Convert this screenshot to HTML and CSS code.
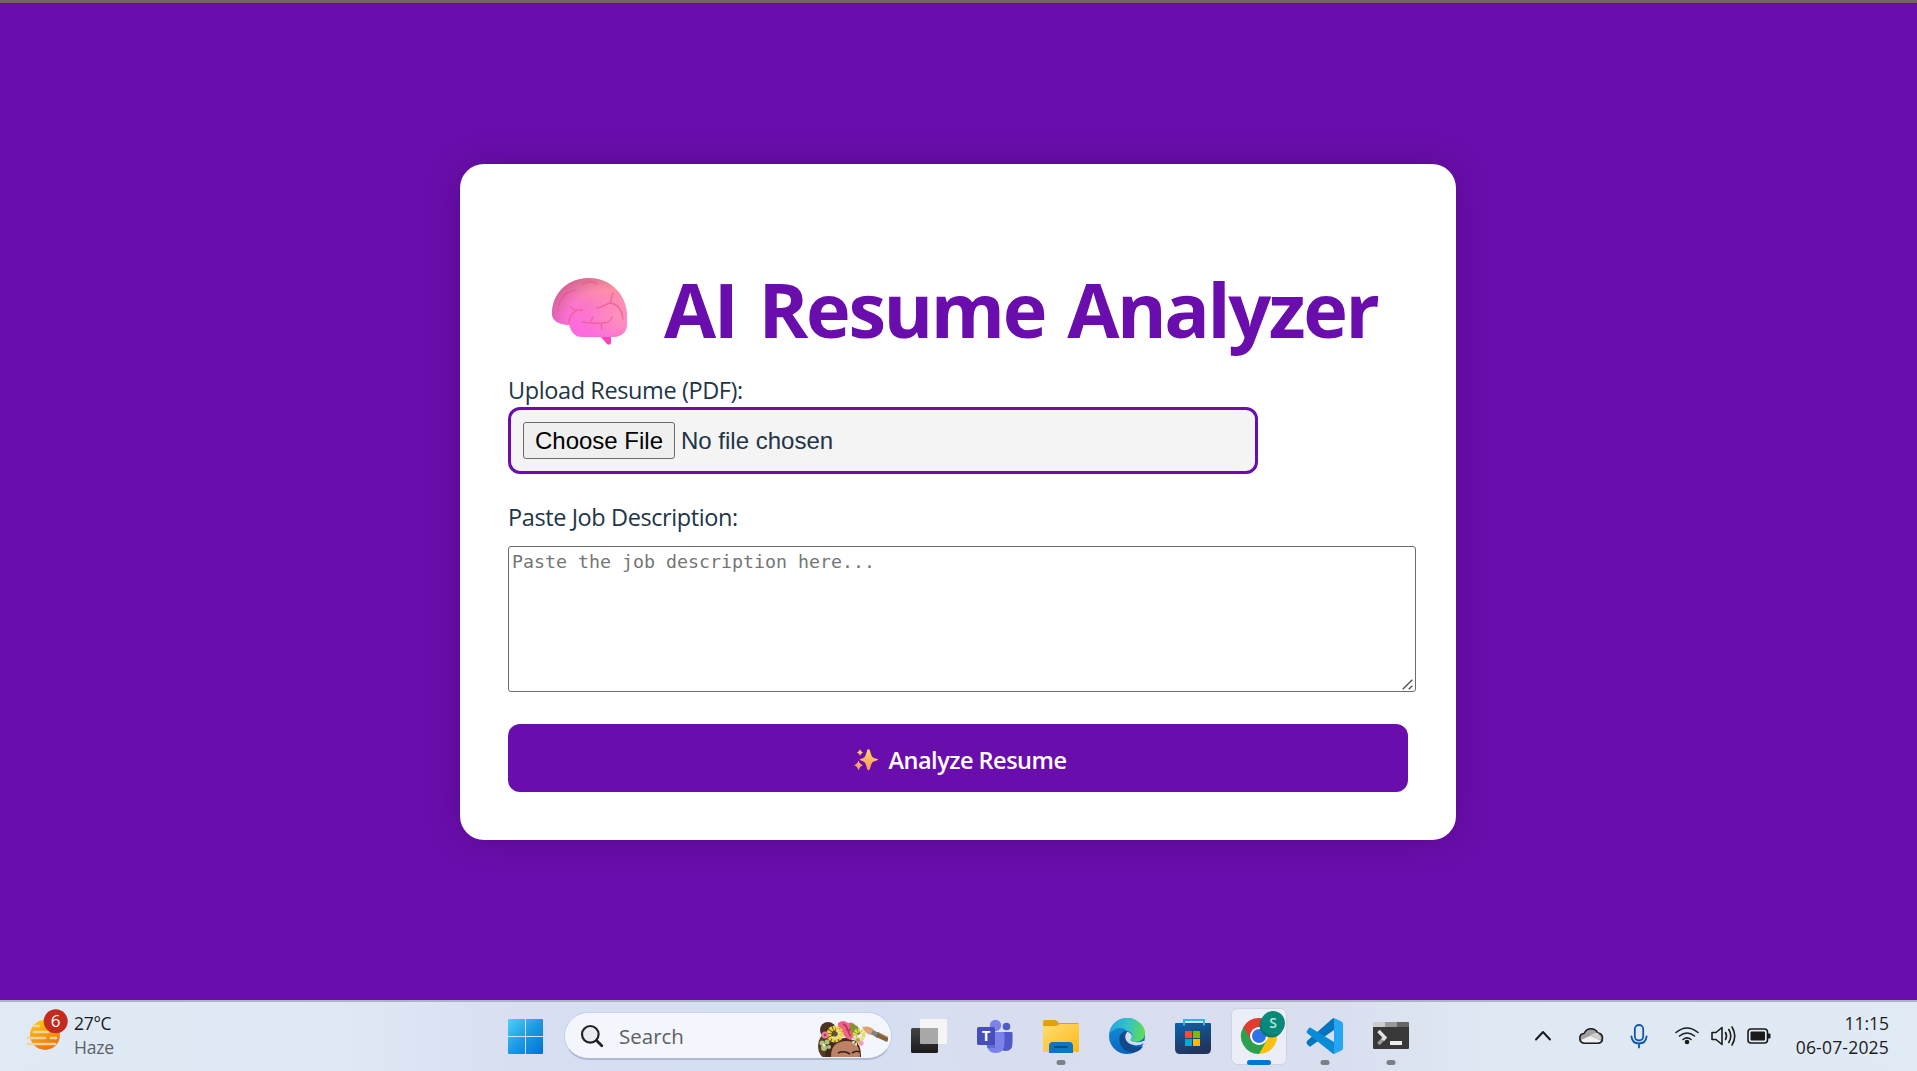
FILE: index.html
```html
<!DOCTYPE html>
<html lang="en">
<head>
<meta charset="utf-8">
<title>AI Resume Analyzer</title>
<link rel="stylesheet" href="styles.css">
</head>
<body>
<main class="page">
  <form class="card">
    <h1 class="title">
      <svg class="brain" viewBox="0 0 76 68" aria-hidden="true">
        <defs>
          <linearGradient id="brainBase" x1="0.75" y1="0" x2="0.35" y2="1">
            <stop offset="0" stop-color="#ff9d96"/><stop offset="0.5" stop-color="#fb78c8"/><stop offset="1" stop-color="#fd68e4"/>
          </linearGradient>
          <radialGradient id="brainEdge" cx="0.72" cy="0.72" r="0.78">
            <stop offset="0.65" stop-color="#c85a8c" stop-opacity="0"/><stop offset="1" stop-color="#c85a8c" stop-opacity="0.7"/>
          </radialGradient>
          <radialGradient id="brainGlow" cx="0.9" cy="0.65" r="0.45">
            <stop offset="0" stop-color="#ff92bc"/><stop offset="1" stop-color="#ff92bc" stop-opacity="0"/>
          </radialGradient>
        </defs>
        <path d="M48 58h11v7q-1 3-4 1z" fill="#fb43bd"/>
        <path d="M0 36C0 14 17 0 37 0c22 0 38 17 38 38v8c0 8-6 13-13 13H30c-8 0-11-6-13-12C8 47 0 43 0 36z" fill="url(#brainBase)"/>
        <path d="M0 36C0 14 17 0 37 0c22 0 38 17 38 38v8c0 8-6 13-13 13H30c-8 0-11-6-13-12C8 47 0 43 0 36z" fill="url(#brainGlow)"/>
        <path d="M0 36C0 14 17 0 37 0c22 0 38 17 38 38v8c0 8-6 13-13 13H30c-8 0-11-6-13-12C8 47 0 43 0 36z" fill="url(#brainEdge)"/>
        <g fill="none" stroke="#ec5286" stroke-width="1.3" stroke-linecap="round" opacity="0.7">
          <path d="M6 33c1-12 7-19 17-21M31 6c4-3 10-3 14 0M45 30c5 0 8-4 13-5 8 1 12 8 13 16M58 25l3-10M19 29c3 5 6 2 11 3M17 45c0-6 2-10 7-12M30 44c8 1 22 3 28-1l2-4M39 43l2-4M49 45l1 6"/>
        </g>
      </svg>
      <span class="title-text">AI Resume Analyzer</span>
    </h1>
    <label class="label" for="resume">Upload Resume (PDF):</label>
    <input class="file" id="resume" type="file" accept=".pdf">
    <label class="label label-job" for="job">Paste Job Description:</label>
    <div class="job-wrap">
      <textarea class="job" id="job" placeholder="Paste the job description here..."></textarea>
      <svg class="grip" viewBox="0 0 11 11" aria-hidden="true"><path d="M.7 10.300l9.600-9.600M6.700 10.300l3.600-3.600" stroke="#4c4c4c" stroke-width="1.300"/></svg>
    </div>
    <button class="submit" type="button">
      <svg class="sparkles" viewBox="0 0 24 22" aria-hidden="true">
        <defs><linearGradient id="spark" x1="0.6" y1="0" x2="0.3" y2="1"><stop offset="0" stop-color="#ffd95e"/><stop offset="1" stop-color="#ff9068"/></linearGradient></defs>
        <g fill="url(#spark)">
          <path d="M14.500 .3q1 0 1.500 1.400 1.300 5.300 2.700 6.500 1.200 1 4.700 1.900 1.100 .6 0 1.200-3.600 .8-4.900 2-1.200 1.200-2.500 6.500-.5 1.400-1.500 1.400t-1.500-1.400q-1.200-5.300-2.500-6.500-1.200-1.200-4.200-2-1-.6 0-1.200 3-.9 4-1.900 1.400-1.200 2.700-6.500 .5-1.400 1.500-1.400z"/>
          <path d="M6 .3q.7 2.400 3 3.200-2.300 .8-3 3.200-.7-2.400-3-3.200 2.300-.8 3-3.200zM4.500 11.500q1.100 3.700 4.200 4.800-3.100 1.100-4.200 4.900-1.100-3.800-4.400-4.900 3.300-1.100 4.400-4.800z"/>
        </g>
      </svg>
      <span class="submit-text">Analyze Resume</span>
    </button>
  </form>
</main>

<footer class="taskbar">
  <div class="weather">
    <svg class="weather-icon" viewBox="26 1006 44 46">
      <defs><linearGradient id="sun" x1="0" y1="0" x2="0.4" y2="1"><stop offset="0" stop-color="#ffcf0a"/><stop offset="1" stop-color="#f3750c"/></linearGradient></defs>
      <circle cx="45" cy="1035" r="15" fill="url(#sun)"/>
      <g stroke="#f0d3a0" stroke-width="2.600" stroke-linecap="round"><path d="M34 1026h5M34 1032h14M28 1038h17M51 1038h5M28 1044h27"/></g>
      <circle cx="55.700" cy="1021.300" r="12" fill="#c42b1c"/>
      <text class="badge-count" x="55.700" y="1027">6</text>
    </svg>
    <div class="weather-text"><span class="temp">27°C</span><span class="haze">Haze</span></div>
  </div>

  <div class="apps">
    <svg class="app" viewBox="0 0 66 69">
      <defs><linearGradient id="win" gradientUnits="userSpaceOnUse" x1="16" y1="17" x2="51" y2="52"><stop offset="0" stop-color="#4cd0fb"/><stop offset="0.5" stop-color="#1b9ae4"/><stop offset="1" stop-color="#0272d0"/></linearGradient></defs>
      <path d="M17 17h16v17H16V18q0-1 1-1zM34 17h16q1 0 1 1v16H34zM16 35h17v17H17q-1 0-1-1zM34 35h17v16q0 1-1 1H34z" fill="url(#win)"/>
    </svg>
    <div class="search">
      <svg class="search-icon" viewBox="0 0 24 24"><circle cx="10.300" cy="10.300" r="8.300" fill="#e9ebf2" stroke="#222" stroke-width="2.200"/><path d="M16.500 16.500l5.300 5.300" stroke="#222" stroke-width="2.800" stroke-linecap="round"/></svg>
      <span class="search-text">Search</span>
      <svg class="highlight" viewBox="0 0 72 38">
        <defs><clipPath id="pillEnd"><path d="M0 0h68q2 4 2 10v10L62 37H0z"/></clipPath></defs>
        <g clip-path="url(#pillEnd)">
          <circle cx="10" cy="10" r="8" fill="#4a3324"/><ellipse cx="8" cy="26" rx="8" ry="12" fill="#5a3b26"/>
          <path d="M7 37c0-14 8-18 20-19s16 7 16 19z" fill="#432a1d"/>
          <path d="M13 37c0-11 5-15 14-16s15 4 15 16z" fill="#bd8163"/>
          <path d="M20 33q6-3 12 1M34 33q4-3 8-1" stroke="#302019" stroke-width="1.600" fill="none"/>
          <path d="M20 3q5-4 10 0 6-2 8 5 2 8-3 12-7 0-10-6-6-4-5-11z" fill="#ed6487"/><path d="M25 4q5 2 4 7M33 8q-5 4 0 8" stroke="#b92d59" stroke-width="1.500" fill="none"/>
          <path d="M32 4q8-1 11 9l-5 5q-7-5-6-14z" fill="#80952f"/>
          <circle cx="17" cy="14" r="6" fill="none" stroke="#e9d23e" stroke-width="5" stroke-dasharray="2.500 .7"/><circle cx="17" cy="14" r="2.800" fill="#66551a"/>
          <circle cx="41" cy="15" r="4.500" fill="none" stroke="#e6d457" stroke-width="4" stroke-dasharray="2 .8"/><circle cx="39" cy="20" r="4" fill="none" stroke="#e9e6c8" stroke-width="3" stroke-dasharray="2 1"/><circle cx="40" cy="20" r="2" fill="#b9a530"/>
          <circle cx="7" cy="15" r="3.500" fill="#e77c98"/><circle cx="7" cy="15" r="1.300" fill="#a93358"/><circle cx="43" cy="23" r="2.600" fill="#ef9fb1"/>
          <g fill="#a9c47b"><circle cx="4" cy="23" r="2.500"/><circle cx="9" cy="22" r="2.500"/><circle cx="6" cy="28" r="3"/><circle cx="11" cy="27" r="2"/></g><circle cx="6" cy="25" r="1.500" fill="#edf2d3"/>
          <path d="M44 7q8-2 12 3l-2 5q-6 0-10-8z" fill="#dda176"/><path d="M55 10l6 3-2 5-6-4z" fill="#7e8187"/><path d="M60 12l12 6-1 5-13-6z" fill="#83613d"/><path d="M61 13l10 5" stroke="#c29a6c"/>
        </g>
      </svg>
    </div>
    <svg class="app" viewBox="0 0 66 69">
      <defs><linearGradient id="tvD" x1="0" y1="0" x2="0" y2="1"><stop offset="0" stop-color="#444"/><stop offset="1" stop-color="#1b1b1b"/></linearGradient></defs>
      <rect x="15" y="26" width="27" height="25" rx="1.500" fill="url(#tvD)"/><path d="M24 26v-8q0-1 1-1h25q1 0 1 1v23q0 1-1 1h-8V26z" fill="#f5f5f6"/><path d="M24 26h18v16H25q-1 0-1-1z" fill="#a7a8a8"/>
    </svg>
    <svg class="app" viewBox="0 0 66 69">
      <circle cx="33.500" cy="23.500" r="5.700" fill="#7b83eb"/><circle cx="44.500" cy="24.500" r="3.800" fill="#5059c9"/>
      <path d="M40 30h9.500q1 0 1 1v10q0 8-7 8-3 0-5-2z" fill="#5059c9"/><path d="M26 30h15q1.500 0 1.500 1.500V41q0 10-9 10-8 0-9-9z" fill="#7b83eb"/>
      <path d="M24 28h9v18h-8z" fill="#3d46a8" opacity=".4"/><rect x="15" y="25" width="18" height="18" rx="1.500" fill="#464eb8"/><text class="teams-letter" x="24" y="39">T</text>
    </svg>
    <svg class="app" viewBox="0 0 66 69">
      <defs><linearGradient id="fold" x1="0" y1="0" x2="1" y2="1"><stop offset="0" stop-color="#ffdd73"/><stop offset="1" stop-color="#fcb915"/></linearGradient></defs>
      <path d="M15 20q0-2 2-2h9q2 0 3 1l2 2h18q2 0 2 2v8H15z" fill="#e3a00c"/><path d="M15 25q0-1 1-1h11q2 0 3-1l2-1h18q1 0 1 1v27H15z" fill="url(#fold)"/>
      <path d="M21 51v-7q0-4 4-4h16q4 0 4 4v7z" fill="#1273c4"/><path d="M27 45h12" stroke="#084b82" stroke-width="2" stroke-linecap="round"/>
      <rect x="28.500" y="58" width="9" height="5" rx="2.500" fill="#7c7f87"/>
    </svg>
    <svg class="app" viewBox="0 0 66 69">
      <defs>
        <linearGradient id="eTop" x1="0" y1="0.5" x2="1" y2="0.6"><stop offset="0" stop-color="#22a8dd"/><stop offset=".5" stop-color="#35c1c9"/><stop offset="1" stop-color="#61df4b"/></linearGradient>
        <linearGradient id="eBody" x1="0" y1="0" x2="0.2" y2="1"><stop offset="0" stop-color="#1496d8"/><stop offset="1" stop-color="#0a66c2"/></linearGradient>
      </defs>
      <path d="M15 34a18 18 0 1 1 18 18A18 18 0 0 1 15 34z" fill="url(#eBody)"/>
      <path d="M15 33C16 23 24 16 33 16c11 0 18 8 18 15 0 6-5 9-9 9-3 0-6-1-5-3 3-4 0-8-4-8-6-6-15-2-18 4z" fill="url(#eTop)"/>
      <path d="M33 29c-6 0-9 6-7 12 2 7 9 11 16 9 3-1 6-3 7-6-7 3-19-2-16-11z" fill="#114a8b"/>
      <path d="M33 30c-4 5-1 12 7 13q5 1 10-2 0 2-1 4 4-1 4-6l-4 0q-3 2-8 1c-5-1-5-2-4-3 2-3 0-7-4-7z" fill="#d7ddef"/>
    </svg>
    <svg class="app" viewBox="0 0 66 69">
      <defs><linearGradient id="store" x1="0" y1="0" x2="0.4" y2="1"><stop offset="0" stop-color="#0b63ae"/><stop offset="1" stop-color="#21355d"/></linearGradient></defs>
      <path d="M15 22q0-1 1-1h34q1 0 1 1v25q0 5-5 5H20q-5 0-5-5z" fill="url(#store)"/><path d="M24 23.500v-5.500h20v5.500" fill="none" stroke="#25b7f0" stroke-width="2"/>
      <path d="M25 29h7v7h-7z" fill="#f25022"/><path d="M33 29h7v7h-7z" fill="#7fba00"/><path d="M25 37h7v7h-7z" fill="#00a4ef"/><path d="M33 37h7v7h-7z" fill="#ffb900"/>
    </svg>
    <svg class="app" viewBox="0 0 66 69">
      <rect x="5.500" y="6.500" width="55" height="56" rx="6" fill="#ebeef7" stroke="#cdd3e4"/>
      <path d="M33 34L17.400 25A18 18 0 0 1 48.600 25z" fill="#e33b2e"/><path d="M33 34L48.600 25A18 18 0 0 1 33 52z" fill="#fcc10f"/><path d="M33 34v18A18 18 0 0 1 17.400 25z" fill="#2da04d"/>
      <path d="M17.400 25L25.200 38.500 33 25z" fill="#e33b2e"/><path d="M33 25h15.600L40.800 38.500z" fill="#fcc10f"/><path d="M25.200 38.500h15.600L33 52z" fill="#2da04d"/>
      <circle cx="33" cy="34" r="9" fill="#fff"/><circle cx="33" cy="34" r="7" fill="#2f73e8"/>
      <circle cx="45.500" cy="23.500" r="12" fill="#08796c"/><circle cx="47" cy="21" r="12" fill="#0a897b"/><text class="profile-letter" x="47" y="26">S</text>
      <rect x="21" y="58" width="24" height="5" rx="2.500" fill="#0078d4"/>
    </svg>
    <svg class="app" viewBox="0 0 66 69">
      <path d="M15 39l25-22q1-1 2-1v12L19 44q-1 1-2 0l-2-2q-1-1 0-3z" fill="#0074bd"/>
      <path d="M15 29l2-3q1-1 2 0l23 14v12q-1 0-2-1L15 31q-1-1 0-2z" fill="#0a8bd7"/><path d="M41 16q1 0 2 .5l6.500 3q1.500 1 1.500 2.500v24q0 1.500-1.500 2.500l-6.500 3q-1 .5-2 .5 1-.5 1-2V18q0-1.500-1-2z" fill="#26a6f2"/>
      <rect x="28.500" y="58" width="9" height="5" rx="2.500" fill="#7c7f87"/>
    </svg>
    <svg class="app" viewBox="0 0 66 69">
      <path d="M15 21q0-1 1-1h11v5H15z" fill="#ccc"/><path d="M27 20h12v5H27z" fill="#999"/><path d="M39 20h11q1 0 1 1v4H39z" fill="#666"/><path d="M15 25h36v21q0 1-1 1H16q-1 0-1-1z" fill="#393939"/>
      <path d="M20.500 42l6-6.500" stroke="#999" stroke-width="3.500"/><path d="M20.500 29l6.300 6.500-2 2.500" fill="none" stroke="#e3e3e3" stroke-width="3.500"/><rect x="32" y="39" width="12" height="4" fill="#eee"/>
      <rect x="28.500" y="58" width="9" height="5" rx="2.500" fill="#7c7f87"/>
    </svg>
  </div>

  <div class="tray">
    <svg class="tray-icons" viewBox="1525 1002 260 69">
      <g fill="none" stroke="#1b1b1b" stroke-width="1.600" stroke-linecap="round" stroke-linejoin="round">
        <path d="M1536 1039.500l7-7.500 7 7.500" stroke-width="2"/>
        <path d="M1585 1043.200c-4 0-5.200-2.500-5.200-5 0-3 2-4.500 4.200-4.700 1.500-3 4-4.700 7-4.700 3.500 0 5.500 1.700 6.800 4.200 3 .3 4.700 2.200 4.700 5 0 3.200-2 5.200-5 5.200z" fill="#a2a2a2"/>
        <path d="M1585 1042.200c-2 0-3.500-1-3.500-2.500l9-4 10.500 5q-1 1.500-3.500 1.500z" fill="#f0f0f0" stroke="none"/>
        <path d="M1590 1035l5-2h3l3 5-1 2z" fill="#d0d0d0" stroke="none"/>
        <g stroke="#0f56ad" stroke-width="1.800"><rect x="1634.800" y="1025" width="8.400" height="15.500" rx="4.200"/><path d="M1631.400 1036.500q1 7 7.600 7t7.600-7M1639 1043.500v4"/></g>
        <path d="M1676 1032.500q11-9 22 0M1679.500 1036q7.500-6 15 0M1683 1039.500q4-3.200 8 0"/><circle cx="1687" cy="1042" r="1.500" fill="#1b1b1b"/>
        <path d="M1712 1032.500h4l6-5v17l-6-5h-4zM1725.500 1032.500q2 3.500 0 7M1728.800 1029.500q4 6.500 0 13M1732 1027q5.500 9 0 18"/>
        <rect x="1748" y="1029" width="19.500" height="14" rx="3"/><rect x="1750.500" y="1031.500" width="14.500" height="9" rx="1" fill="#1b1b1b" stroke="none"/><path d="M1768.500 1034.500v3l1 0v-3z" stroke-width="2"/>
      </g>
    </svg>
    <div class="clock"><span class="time">11:15</span><span class="date">06-07-2025</span></div>
  </div>
</footer>
</body>
</html>
```
FILE: styles.css
```css
* { box-sizing: border-box; }

body {
  margin: 0;
  width: 1917px;
  height: 1071px;
  overflow: hidden;
  display: flex;
  flex-direction: column;
  font-family: "Open Sans", "Noto Sans", sans-serif;
  color: #213547;
}

.page {
  height: 1000px;
  padding: 161px 1px 0 0;
  display: flex;
  justify-content: center;
  align-items: flex-start;
  background: #6a0dad;
  border-top: 3px solid #75616f;
}

.card {
  width: 996px;
  height: 676px;
  padding: 48px;
  display: flex;
  flex-direction: column;
  align-items: flex-start;
  background: #fff;
  border-radius: 24px;
  box-shadow: 0 0 36px rgba(0, 0, 0, 0.2);
}

.title {
  margin: 54px 0 0;
  width: 900px;
  height: 102px;
  padding-left: 44px;
  display: flex;
  align-items: flex-start;
  font-size: 75.6px;
  line-height: 85px;
  font-weight: 700;
  color: #6a0dad;
}
.brain { width: 76px; height: 68px; margin: 12px 36px 0 0; flex: none; }
.title-text { white-space: nowrap; letter-spacing: -2.4px; word-spacing: 5px; }

.label { height: 39px; line-height: 44px; font-size: 23.5px; white-space: nowrap; letter-spacing: -0.4px; }
.label-job { height: 51px; margin-top: 21px; }

.file {
  width: 750px;
  height: 67px;
  padding: 12px;
  border: 3px solid #6a0dad;
  border-radius: 12px;
  background: #f4f4f4;
  color: #213547;
  font: 24px "Liberation Sans", Arial, sans-serif;
}
.file::file-selector-button {
  width: 152px;
  height: 37px;
  padding: 0;
  margin: 0 6px 0 0;
  border: 1px solid #6b6b6b;
  border-radius: 3px;
  background: #efefef;
  color: #000;
  font: 24px "Liberation Sans", Arial, sans-serif;
}

.job-wrap { position: relative; height: 146px; }
.job {
  display: block;
  width: 908px;
  height: 146px;
  padding: 3px;
  border: 1px solid #6c6c6c;
  border-radius: 3px;
  resize: none;
  font: 18.27px/24px "DejaVu Sans Mono", monospace;
}
.job::placeholder { color: #757575; }
.grip { position: absolute; right: 3px; bottom: 2px; width: 11px; height: 11px; }

.submit {
  width: 900px;
  height: 68px;
  margin-top: 32px;
  padding: 4px 0 0 4px;
  display: flex;
  align-items: center;
  justify-content: center;
  gap: 11px;
  border: 0;
  border-radius: 12px;
  background: #6a0dad;
  color: #fff;
  font: 600 23.5px/32px "Open Sans", sans-serif;
}
.sparkles { width: 24px; height: 22px; }
.submit-text { letter-spacing: -0.5px; }

.taskbar {
  height: 71px;
  display: grid;
  grid-template-columns: 492px 933px 492px;
  border-top: 2px solid #adb5c2;
  background: linear-gradient(90deg, #e0eaf5 0, #dfe9f5 18%, #d7dff1 27%, #d4dff2 42%, #d8deef 52%, #d9dfef 70%, #dfe9f4 78%, #e0eaf5 100%);
}
.weather { display: flex; padding-left: 26px; }
.weather-icon { width: 44px; height: 46px; margin-top: 4px; }
.weather-text, .clock { display: flex; flex-direction: column; font-size: 17.5px; line-height: 24px; color: #1b1b1b; }
.weather-text { padding: 9px 0 0 4px; }
.haze { color: #5c6068; letter-spacing: -0.2px; }
.temp { letter-spacing: -0.3px; }

.apps { display: flex; align-items: flex-start; }
.app { width: 66px; height: 69px; flex: none; }
.search {
  width: 328px;
  height: 48px;
  margin: 10px 4px 0 6px;
  padding-left: 15px;
  display: flex;
  align-items: center;
  border: 1px solid #c9d1e4;
  border-bottom: 2px solid #b1b9d0;
  border-radius: 24px;
  background: #f3f6fc;
  flex: none;
}
.search-icon { width: 24px; height: 24px; flex: none; }
.search-text { width: 214px; padding-left: 15px; font-size: 20.5px; color: #5d5f64; flex: none; }
.highlight { width: 72px; height: 38px; margin-top: 6px; flex: none; }

.tray { display: flex; justify-content: space-between; padding: 0 28px 0 100px; }
.tray-icons { width: 260px; height: 69px; flex: none; }
.clock { padding-top: 9px; align-items: flex-end; white-space: nowrap; }
.date { letter-spacing: 0.2px; }

.badge-count { font-size: 17px; fill: #fff; text-anchor: middle; }
.teams-letter { font-size: 15px; font-weight: 700; fill: #fff; text-anchor: middle; }
.profile-letter { font-size: 14px; font-weight: 600; fill: #b7e5dc; text-anchor: middle; }
```
